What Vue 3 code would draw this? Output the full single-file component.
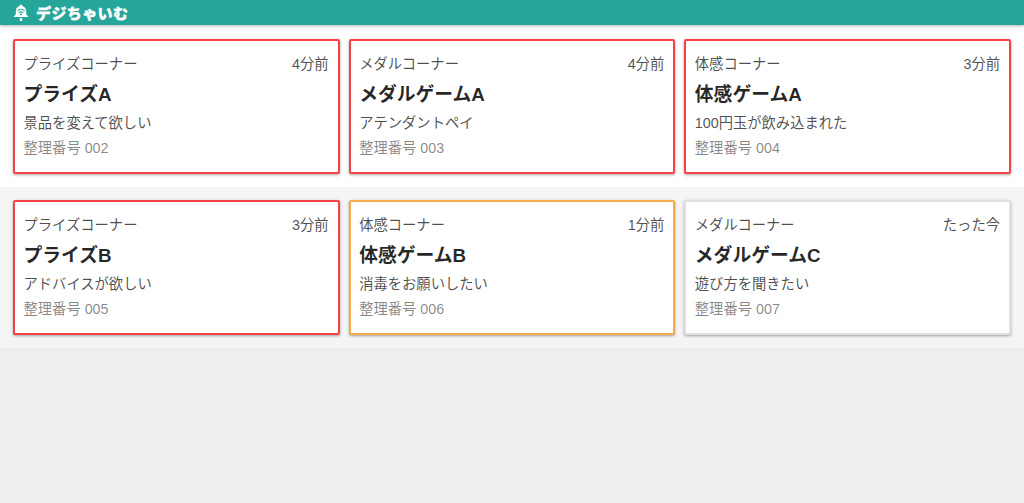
<script setup>
const rows = [
  [
    { corner: 'プライズコーナー', time: '4分前', name: 'プライズA', msg: '景品を変えて欲しい', no: '002', level: 'red' },
    { corner: 'メダルコーナー', time: '4分前', name: 'メダルゲームA', msg: 'アテンダントペイ', no: '003', level: 'red' },
    { corner: '体感コーナー', time: '3分前', name: '体感ゲームA', msg: '100円玉が飲み込まれた', no: '004', level: 'red' }
  ],
  [
    { corner: 'プライズコーナー', time: '3分前', name: 'プライズB', msg: 'アドバイスが欲しい', no: '005', level: 'red' },
    { corner: '体感コーナー', time: '1分前', name: '体感ゲームB', msg: '消毒をお願いしたい', no: '006', level: 'orange' },
    { corner: 'メダルコーナー', time: 'たった今', name: 'メダルゲームC', msg: '遊び方を聞きたい', no: '007', level: 'none' }
  ]
]
</script>

<template>
  <div class="page">
    <header class="bar">
      <svg class="bell" width="16" height="18" viewBox="0 0 16 18">
        <path d="M8 .8c.8 0 1.300.5 1.400 1.200C11.800 2.700 13.200 4.800 13.200 7.500v2.700l2.300 2.800H.5l2.300-2.800V7.500C2.800 4.800 4.200 2.700 6.600 2 6.700 1.300 7.200.8 8 .8z" fill="#fff" />
        <path d="M4.300 6.700c2.100-1.700 5.300-1.700 7.400 0M5.700 8.700c1.400-1 3.200-1 4.600 0" stroke="#26a69a" stroke-width="1.100" fill="none" />
        <circle cx="8" cy="10.600" r="1" fill="#26a69a" />
        <rect x="6.800" y="14" width="2.400" height="3" fill="#fff" />
      </svg>
      <span class="logo">デジちゃいむ</span>
    </header>
    <section v-for="(row, i) in rows" :key="i" class="row" :class="{ alt: i === 1 }">
      <article v-for="c in row" :key="c.no" class="card" :class="c.level">
        <div class="top">
          <span>{{ c.corner }}</span>
          <span>{{ c.time }}</span>
        </div>
        <div class="name">{{ c.name }}</div>
        <div class="msg">{{ c.msg }}</div>
        <div class="no">整理番号 {{ c.no }}</div>
      </article>
    </section>
  </div>
</template>

<style>
html, body { margin: 0; background: #eeeeee; }
</style>

<style scoped>
.page {
  min-height: 503px;
  background: #eeeeee;
  font-family: "Liberation Sans", "Noto Sans CJK JP", sans-serif;
  color: rgba(0, 0, 0, 0.87);
}
.bar {
  height: 25px;
  background: #26a69a;
  display: flex;
  align-items: center;
  gap: 7px;
  padding-left: 13px;
  box-shadow: 0 1px 3px rgba(0, 0, 0, 0.3);
  position: relative;
  box-sizing: border-box;
}
.logo {
  color: #fff;
  font-family: "Noto Sans CJK JP", sans-serif;
  font-weight: 900;
  font-size: 15px;
  letter-spacing: 0.4px;
  line-height: 25px;
  -webkit-text-stroke: 0.3px #fff;
}
.row {
  display: grid;
  grid-template-columns: repeat(3, 1fr);
  gap: 9px;
  padding: 14px 13px 13px;
  background: #fff;
}
.row.alt {
  background: #f5f5f5;
  padding-top: 13px;
}
.card {
  box-sizing: border-box;
  height: 135px;
  background: #fff;
  border: 2px solid #e0e0e0;
  border-radius: 2px;
  padding: 13px 9px 0 8.500px;
  box-shadow: 0 1px 3px rgba(0, 0, 0, 0.35);
}
.card.red { border-color: #f44346; }
.card.orange { border-color: #f5ab4a; }
.top {
  display: flex;
  justify-content: space-between;
  font-size: 14.300px;
  line-height: 20px;
  color: rgba(0, 0, 0, 0.7);
}
.name {
  font-size: 18.800px;
  font-weight: 700;
  line-height: 26px;
  margin-top: 8px;
  color: rgba(0, 0, 0, 0.85);
}
.msg {
  font-size: 14.300px;
  line-height: 20px;
  margin-top: 5px;
  color: rgba(0, 0, 0, 0.7);
}
.no {
  font-size: 14.300px;
  line-height: 20px;
  margin-top: 5px;
  color: rgba(0, 0, 0, 0.48);
}
</style>
